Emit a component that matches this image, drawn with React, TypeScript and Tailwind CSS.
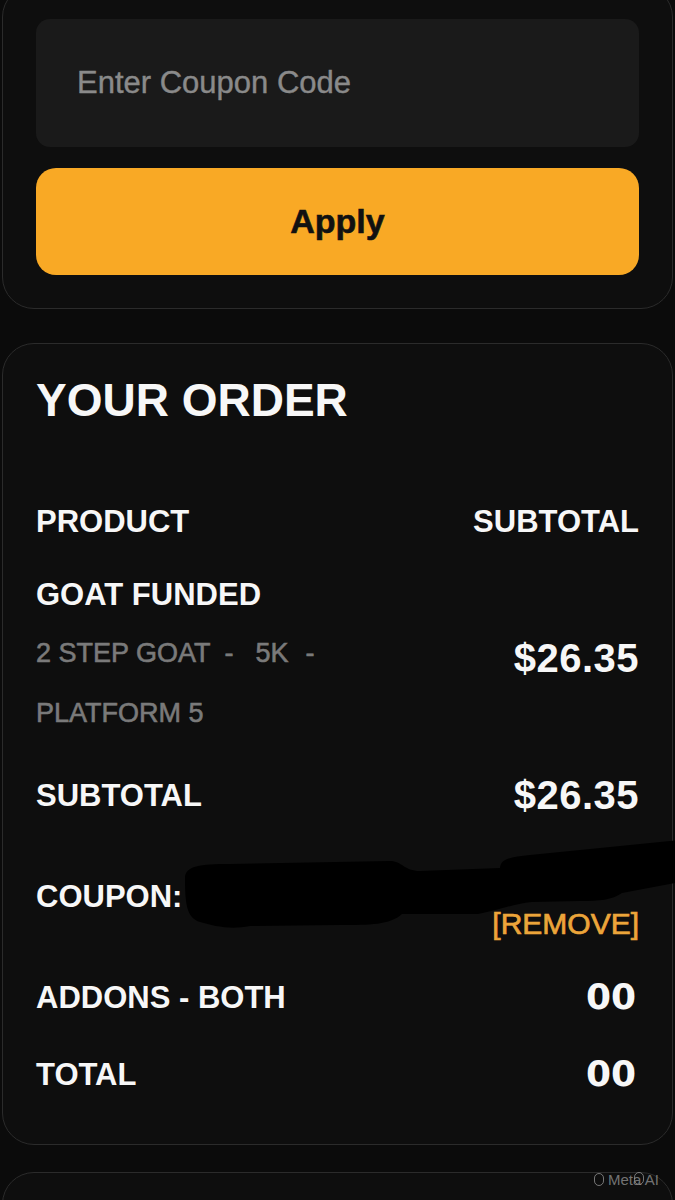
import type { ReactNode } from "react";

const font = { fontFamily: '"Liberation Sans", Arial, sans-serif' };
const wide = { fontFamily: '"DejaVu Sans", sans-serif' };

function Row({ children, className = "" }: { children: ReactNode; className?: string }) {
  return <div className={`flex justify-between ${className}`}>{children}</div>;
}

function Ring({ className = "" }: { className?: string }) {
  return <span className={`inline-block h-[13px] w-[10px] rounded-full border border-[#a0a0a0]/70 ${className}`} />;
}

// overlapping "Meta AI" marks in the bottom corner
function Watermark() {
  return (
    <div className="pointer-events-none absolute left-[594px] top-[1172px] flex items-center gap-[4px] whitespace-nowrap text-[15px] leading-none text-[#a0a0a0]/70">
      <Ring />
      <span>Meta AI</span>
      <Ring className="absolute left-[40px] top-0" />
    </div>
  );
}

// hand-drawn marker stroke hiding the coupon code
function Redaction() {
  return (
    <svg
      className="pointer-events-none absolute left-[177px] top-[491px]"
      width="500"
      height="100"
      viewBox="180 835 500 100"
    >
      <path
        fill="#000"
        d="M185 878 C185 866 200 864 230 864 L390 861 C402 861 404 871 420 871 L500 868 C501 858 512 857 530 855 L680 840 L680 882 L622 893 C612 900 600 901 580 901 L532 902 C512 904 500 910 478 914 L402 914 C390 925 370 925 340 925 L250 926 C230 930 214 926 200 922 C187 918 185 905 185 878 Z"
      />
    </svg>
  );
}

function CouponCard() {
  return (
    <div className="-mt-[15px] flex flex-col gap-[21px] rounded-[32px] border border-[#2b2b2b] bg-[#0e0e0e] p-[33px]">
      <input
        className="h-[128px] w-full rounded-[14px] bg-[#1a1a1a] px-[41px] text-[31px] text-white outline-none [-webkit-text-stroke:0.4px_#8a8a8a] placeholder:text-[#8a8a8a]"
        style={font}
        placeholder="Enter Coupon Code"
      />
      <button
        className="flex h-[107px] w-full items-center justify-center rounded-[20px] bg-[#f9a925] text-[34px] font-bold text-[#111] [-webkit-text-stroke:0.6px_#111]"
        style={font}
      >
        Apply
      </button>
    </div>
  );
}

function OrderCard() {
  return (
    <div className="relative mt-[34px] flex flex-col rounded-[32px] border border-[#2b2b2b] bg-[#0e0e0e] px-[33px] pb-[52px] pt-[33px] text-[#f7f7f7]">
      <h2 className="text-[46px] font-bold leading-none">YOUR ORDER</h2>

      <Row className="mt-[83px] text-[31px] font-bold leading-none">
        <span>PRODUCT</span>
        <span>SUBTOTAL</span>
      </Row>

      <div className="mt-[42px] text-[31px] font-bold leading-none">GOAT FUNDED</div>

      <Row className="mt-[13px] items-start">
        <div className="text-[27px] leading-[60px] text-[#7a7a7a] [-webkit-text-stroke:0.6px_#7a7a7a]">
          <div>
            2 STEP GOAT<span className="ml-[14px] mr-[22px]">-</span>5K<span className="ml-[17px]">-</span>
          </div>
          <div>PLATFORM 5</div>
        </div>
        <span className="mt-[15px] text-[40px] font-bold leading-none tracking-[0.5px]">$26.35</span>
      </Row>

      <Row className="mt-[32px] items-center">
        <span className="text-[31px] font-bold leading-none">SUBTOTAL</span>
        <span className="text-[40px] font-bold leading-none tracking-[0.5px]">$26.35</span>
      </Row>

      <Row className="mt-[66px] items-start">
        <span className="text-[31px] font-bold leading-none">COUPON:</span>
        <span className="mt-[28px] text-[30px] leading-none text-[#eca53a] [-webkit-text-stroke:0.7px_#eca53a]">[REMOVE]</span>
      </Row>

      <Row className="mt-[40px] items-center">
        <span className="text-[31px] font-bold leading-none">ADDONS - BOTH</span>
        <span className="pr-[3px] text-[36px] font-bold leading-none" style={wide}>
          00
        </span>
      </Row>

      <Row className="mt-[41px] items-center">
        <span className="text-[31px] font-bold leading-none">TOTAL</span>
        <span className="pr-[3px] text-[36px] font-bold leading-none" style={wide}>
          00
        </span>
      </Row>

      <Redaction />
    </div>
  );
}

export default function App() {
  return (
    <div className="relative h-[1200px] overflow-hidden bg-[#0b0b0b] px-[2px]" style={font}>
      <CouponCard />
      <OrderCard />
      <div className="mt-[27px] h-[120px] rounded-[32px] border border-[#2b2b2b] bg-[#0e0e0e]" />
      <Watermark />
    </div>
  );
}
